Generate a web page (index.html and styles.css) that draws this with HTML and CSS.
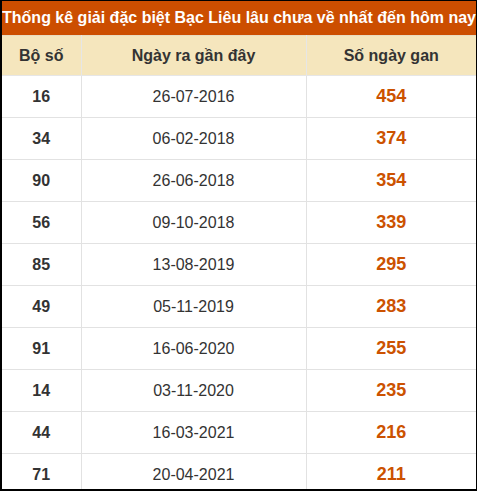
FILE: index.html
```html
<!DOCTYPE html>
<html lang="vi">
<head>
<meta charset="utf-8">
<link rel="stylesheet" href="styles.css">
</head>
<body>
<div class="frame">
  <div class="title">Thống kê giải đặc biệt Bạc Liêu lâu chưa về nhất đến hôm nay</div>
  <table class="gan">
    <colgroup><col class="c1"><col class="c2"><col class="c3"></colgroup>
    <thead>
      <tr><th>Bộ số</th><th>Ngày ra gần đây</th><th>Số ngày gan</th></tr>
    </thead>
    <tbody>
      <tr><td class="num">16</td><td>26-07-2016</td><td class="days">454</td></tr>
      <tr><td class="num">34</td><td>06-02-2018</td><td class="days">374</td></tr>
      <tr><td class="num">90</td><td>26-06-2018</td><td class="days">354</td></tr>
      <tr><td class="num">56</td><td>09-10-2018</td><td class="days">339</td></tr>
      <tr><td class="num">85</td><td>13-08-2019</td><td class="days">295</td></tr>
      <tr><td class="num">49</td><td>05-11-2019</td><td class="days">283</td></tr>
      <tr><td class="num">91</td><td>16-06-2020</td><td class="days">255</td></tr>
      <tr><td class="num">14</td><td>03-11-2020</td><td class="days">235</td></tr>
      <tr><td class="num">44</td><td>16-03-2021</td><td class="days">216</td></tr>
      <tr><td class="num">71</td><td>20-04-2021</td><td class="days">211</td></tr>
    </tbody>
  </table>
</div>
</body>
</html>
```
FILE: styles.css
```css
html, body {
  margin: 0;
  padding: 0;
  background: #fff;
}
.frame {
  box-sizing: border-box;
  width: 477px;
  height: 491px;
  overflow: hidden;
  border: 1px solid #000;
  border-left-width: 2px;
  border-bottom-width: 2px;
  font-family: "Liberation Sans", Arial, sans-serif;
  color: #333;
}
.title {
  height: 34px;
  line-height: 34px;
  background: #cc4e00;
  color: #fff;
  font-weight: bold;
  font-size: 16px;
  text-align: center;
  white-space: nowrap;
  overflow: hidden;
}
.gan {
  width: 100%;
  border-collapse: collapse;
  table-layout: fixed;
}
.c1 { width: 79px; }
.c2 { width: 225px; }
.gan th {
  height: 39px;
  padding: 0;
  background: #f5e6bd;
  font-size: 16px;
  font-weight: bold;
  color: #333;
  border: 1px solid #e6e6e6;
  border-top-color: #e9dcc0;
}
.gan td {
  height: 41px;
  padding: 0;
  text-align: center;
  font-size: 16px;
  border: 1px solid #e2e2e2;
}
.gan tr > :first-child { border-left: none; }
.gan tr > :last-child { border-right: none; }
.gan td.num {
  font-weight: bold;
}
.gan td.days {
  font-weight: bold;
  font-size: 18px;
  color: #cc5200;
}
```
